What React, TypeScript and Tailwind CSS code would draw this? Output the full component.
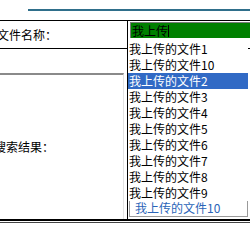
const options = [
  "我上传的文件1",
  "我上传的文件10",
  "我上传的文件2",
  "我上传的文件3",
  "我上传的文件4",
  "我上传的文件5",
  "我上传的文件6",
  "我上传的文件7",
  "我上传的文件8",
  "我上传的文件9",
];

export default function App() {
  return (
    <div
      className="relative w-[250px] h-[230px] overflow-hidden bg-white text-[12px] leading-[16px] text-black"
      style={{ fontFamily: '"Noto Sans CJK SC", "Liberation Sans", sans-serif' }}
    >
      {/* header rule */}
      <div className="h-[20px] pt-[9px] pl-[28px]">
        <div className="h-[2px] bg-[#2f6f8b]" />
      </div>

      {/* form table */}
      <div className="border-t border-black">
        <div className="flex h-[28px] border-b border-black">
          <div className="w-[127px] flex items-center">
            <span className="-ml-[3px]">文件名称：</span>
          </div>
          <div className="flex-1 border-l border-black pt-[1px] pl-[2px]">
            <div className="h-[16px] bg-[#008000] border-t border-l border-[#7a7a7a] flex items-center pl-[1px]">
              <span>我上传</span>
              <span className="w-px h-[12px] bg-black" />
            </div>
          </div>
        </div>

        <div className="flex h-[24px]">
          <div className="w-[127px]" />
          <div className="flex-1 border-l border-black" />
        </div>

        <div className="flex h-[148px] border-b-2 border-black">
          <div className="w-[127px] flex">
            <div className="w-[124px] border-t-2 border-r border-t-[#8a8a8a] border-r-[#e2e2e2] flex items-center">
              <span className="-ml-[6px]">搜索结果：</span>
            </div>
          </div>
          <div className="flex-1 border-l border-black flex items-end pb-[2px] pl-px pr-[2px]">
            <div className="w-full h-[18px] border border-[#9a9a9a] pl-[5px] text-[#2a64b8] leading-[15px]">
              我上传的文件10
            </div>
          </div>
        </div>
        <div className="h-px mt-px bg-[#444]" />
      </div>

      {/* autocomplete dropdown */}
      <ul className="absolute left-[127px] top-[41px] w-[121px] bg-white border-l border-black">
        {options.map((o, i) => (
          <li
            key={i}
            className={`h-[16px] pl-px whitespace-nowrap ${
              i === 2 ? "bg-[#316ac5] text-white" : ""
            }`}
          >
            {o}
          </li>
        ))}
      </ul>
    </div>
  );
}
